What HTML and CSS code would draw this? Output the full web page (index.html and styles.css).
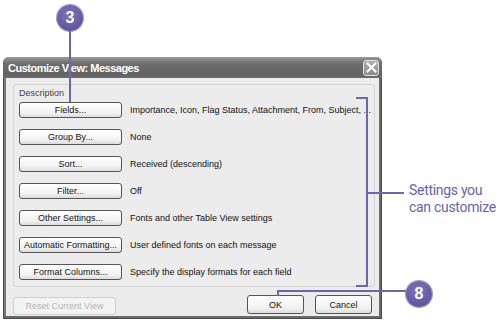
FILE: index.html
```html
<!DOCTYPE html>
<html lang="en">
<head>
    <meta charset="UTF-8">
    <title>Customize View: Messages</title>
    <link rel="stylesheet" href="styles.css">
</head>
<body>

<div class="page">

    <div class="dialog">
        <div class="titlebar">
            <span class="title">Customize View: Messages</span>
            <span class="close">
                <svg width="11" height="11" viewBox="0 0 11 11">
                    <path d="M1.5 1.5 L9.5 9.5 M9.5 1.5 L1.5 9.5" stroke="#fff" stroke-width="2" stroke-linecap="square"/>
                </svg>
            </span>
        </div>

        <div class="body">
            <div class="group">
                <div class="legend">Description</div>

                <div class="row">
                    <button class="btn wide">Fields...</button>
                    <span class="desc">Importance, Icon, Flag Status, Attachment, From, Subject, ...</span>
                </div>
                <div class="row">
                    <button class="btn wide">Group By...</button>
                    <span class="desc">None</span>
                </div>
                <div class="row">
                    <button class="btn wide">Sort...</button>
                    <span class="desc">Received (descending)</span>
                </div>
                <div class="row">
                    <button class="btn wide">Filter...</button>
                    <span class="desc">Off</span>
                </div>
                <div class="row">
                    <button class="btn wide">Other Settings...</button>
                    <span class="desc">Fonts and other Table View settings</span>
                </div>
                <div class="row">
                    <button class="btn wide">Automatic Formatting...</button>
                    <span class="desc">User defined fonts on each message</span>
                </div>
                <div class="row">
                    <button class="btn wide">Format Columns...</button>
                    <span class="desc">Specify the display formats for each field</span>
                </div>
            </div>

            <div class="actions">
                <button class="btn wide disabled">Reset Current View</button>
                <div class="spacer"></div>
                <button class="btn small">OK</button>
                <button class="btn small">Cancel</button>
            </div>
        </div>
    </div>

    <!-- callouts -->
    <div class="badge badge-3">3</div>
    <div class="stem stem-3"></div>

    <div class="bracket"></div>
    <div class="bracket-arm"></div>
    <div class="note">Settings you<br>can customize</div>

    <div class="badge badge-8">8</div>
    <div class="leader-8"></div>

</div>

</body>
</html>
```

FILE: styles.css
```css
body {
    margin: 0;
    padding: 0;
    background: #fff;
    font-family: "Liberation Sans", Arial, sans-serif;
}
.page {
    position: relative;
    width: 500px;
    height: 323px;
    overflow: hidden;
}

/* dialog window */
.dialog {
    margin: 57px 0 0 3px;
    width: 379px;
    height: 262px;
    box-sizing: border-box;
    border: 1px solid #4a4a4a;
    border-top: none;
    border-radius: 6px 6px 0 0;
    background: #ececec;
    display: flex;
    flex-direction: column;
    box-shadow: inset -2px -2px 0 #6a6a6a, inset 2px 0 0 #7a7a7a;
}
.titlebar {
    height: 22px;
    display: flex;
    align-items: center;
    justify-content: space-between;
    padding: 0 3px 0 5px;
    border-radius: 6px 6px 0 0;
    background: linear-gradient(#9a9a9a, #6e6e6e 30%, #626262 80%, #6c6c6c);
    margin: 0 -1px;
}
.title {
    color: #fff;
    font-weight: bold;
    font-size: 11px;
    letter-spacing: -0.5px;
}
.close {
    width: 16px;
    height: 16px;
    box-sizing: border-box;
    border: 1px solid #e0e0e0;
    border-radius: 3px;
    background: linear-gradient(#b0b0b0, #8a8a8a);
    display: flex;
    align-items: center;
    justify-content: center;
}

.body {
    flex: 1;
    padding: 6px 6px 3px 9px;
    display: flex;
    flex-direction: column;
}
.group {
    border: 1px solid #d4d4d4;
    border-radius: 3px;
    height: 203px;
    box-sizing: border-box;
    padding: 3px 0 0 5px;
}
.legend {
    font-size: 9px;
    color: #444;
    height: 14px;
}
.row {
    display: flex;
    align-items: center;
    height: 27px;
    margin-top: -6px;
    margin-bottom: 6px;
}
.row:first-of-type { margin-top: 0; }
.desc {
    font-size: 9px;
    color: #111;
    margin-left: 8px;
    white-space: nowrap;
}

.btn {
    font-family: "Liberation Sans", Arial, sans-serif;
    font-size: 9px;
    color: #111;
    height: 16px;
    padding: 0;
    border: 1px solid #555;
    border-radius: 3px;
    background: linear-gradient(#ffffff, #f2f2f2 70%, #dcdcdc);
    box-sizing: border-box;
}
.btn.wide { width: 103px; }
.btn.small { width: 57px; height: 19px; margin-left: 11px; }
.btn.disabled {
    color: #b4b4b4;
    border-color: #cfcfcf;
    background: #f3f3f3;
    height: 18px;
}

.actions {
    display: flex;
    align-items: flex-start;
    margin-top: 8px;
    padding-right: 3px;
}
.actions .disabled { margin-top: 2px; }
.spacer { flex: 1; }

/* callouts */
.badge {
    position: absolute;
    width: 26px;
    height: 26px;
    border-radius: 50%;
    background: radial-gradient(circle at 45% 35%, #8075b8, #62559e 70%);
    box-shadow: 0 0 0 1px #9f96cb;
    color: #fff;
    font-family: "Liberation Sans", Arial, sans-serif;
    font-weight: bold;
    font-size: 16px;
    line-height: 26px;
    text-align: center;
}
.badge-3 { left: 57px; top: 5px; }
.badge-8 { left: 406px; top: 281px; }
.stem-3 {
    position: absolute;
    left: 69px;
    top: 31px;
    width: 2px;
    height: 71px;
    background: #6f66aa;
}
.bracket {
    position: absolute;
    left: 356px;
    top: 97px;
    width: 10px;
    height: 186px;
    border: 2px solid #6f66aa;
    border-left: none;
}
.bracket-arm {
    position: absolute;
    left: 367px;
    top: 192px;
    width: 37px;
    height: 2px;
    background: #6f66aa;
}
.note {
    position: absolute;
    left: 409px;
    top: 182px;
    font-family: Roboto, "Liberation Sans", sans-serif;
    font-size: 14px;
    line-height: 17px;
    letter-spacing: -0.3px;
    white-space: nowrap;
    color: #6a62a8;
}
.leader-8 {
    position: absolute;
    left: 277px;
    top: 290px;
    width: 129px;
    height: 6px;
    border-top: 2px solid #6f66aa;
    border-left: 2px solid #6f66aa;
    box-sizing: border-box;
}
```
